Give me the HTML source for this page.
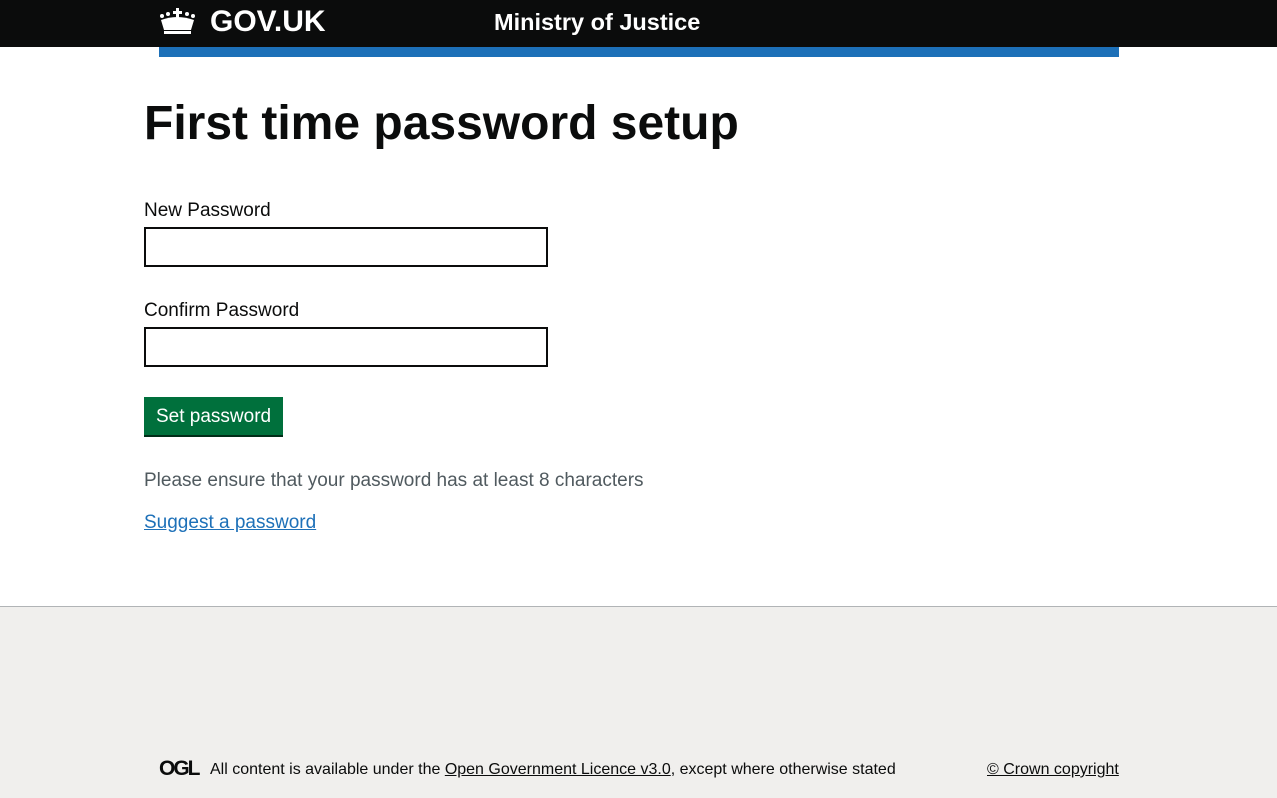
<!DOCTYPE html>
<html><head><meta charset="utf-8"><style>
*{margin:0;padding:0;box-sizing:border-box}
body{width:1277px;height:798px;font-family:"Liberation Sans",Arial,sans-serif;color:#0b0c0c;background:#fff;position:relative;overflow:hidden}
.hdr{position:absolute;left:0;top:0;width:1277px;height:47px;background:#0b0c0c}
.bar{position:absolute;left:159px;top:47px;width:960px;height:10px;background:#1d70b8}
.logo{position:absolute;left:210px;top:5px;color:#fff;font-weight:bold;font-size:30px}
.svc{position:absolute;left:494px;top:9px;color:#fff;font-weight:bold;font-size:23.5px}
h1{position:absolute;left:144px;top:96px;font-size:48px;font-weight:bold}
.lbl{position:absolute;left:144px;font-size:19px}
.inp{position:absolute;left:144px;width:404px;height:40px;border:2px solid #0b0c0c}
.btn{position:absolute;left:144px;top:397px;width:139px;height:38px;background:#00703c;box-shadow:0 2px 0 #002d18;color:#fff;font-size:19px;padding:9px 0 0 12px}
.hint{position:absolute;left:144px;top:470px;font-size:19px;color:#505a5f}
.lnk{position:absolute;left:144px;top:512px;font-size:19px;color:#1d70b8;text-decoration:underline}
.ftr{position:absolute;left:0;top:606px;width:1277px;height:192px;background:#f0efed;border-top:1px solid #b1b4b6}
.ft{position:absolute;top:761px;font-size:16px}
.ft a{color:#0b0c0c}
</style></head><body>
<div class="hdr">
<svg style="position:absolute;left:159px;top:8px" width="37" height="26" viewBox="0 0 37 26" fill="#fff">
<rect x="17" y="0" width="3" height="10"/><rect x="14" y="3" width="9" height="3"/>
<circle cx="3" cy="8" r="2"/><circle cx="9" cy="6" r="2"/><circle cx="28" cy="6" r="2"/><circle cx="34" cy="8" r="2"/>
<path d="M2 12 Q18 6 35 12 L32 22 L5 22 Z"/><rect x="5" y="23" width="27" height="3"/>
</svg>
<div class="logo">GOV.UK</div>
<div class="svc">Ministry of Justice</div>
</div>
<div class="bar"></div>
<h1>First time password setup</h1>
<div class="lbl" style="top:200px">New Password</div>
<div class="inp" style="top:227px"></div>
<div class="lbl" style="top:300px">Confirm Password</div>
<div class="inp" style="top:327px"></div>
<div class="btn">Set password</div>
<div class="hint">Please ensure that your password has at least 8 characters</div>
<div class="lnk">Suggest a password</div>
<div class="ftr"></div>
<div class="ft" style="left:159px;top:757px;font-weight:900;font-size:21px;letter-spacing:-2px">OGL</div>
<div class="ft" style="left:210px">All content is available under the <a href="#">Open Government Licence v3.0</a>, except where otherwise stated</div>
<div class="ft" style="left:987px"><a href="#">© Crown copyright</a></div>
</body></html>
